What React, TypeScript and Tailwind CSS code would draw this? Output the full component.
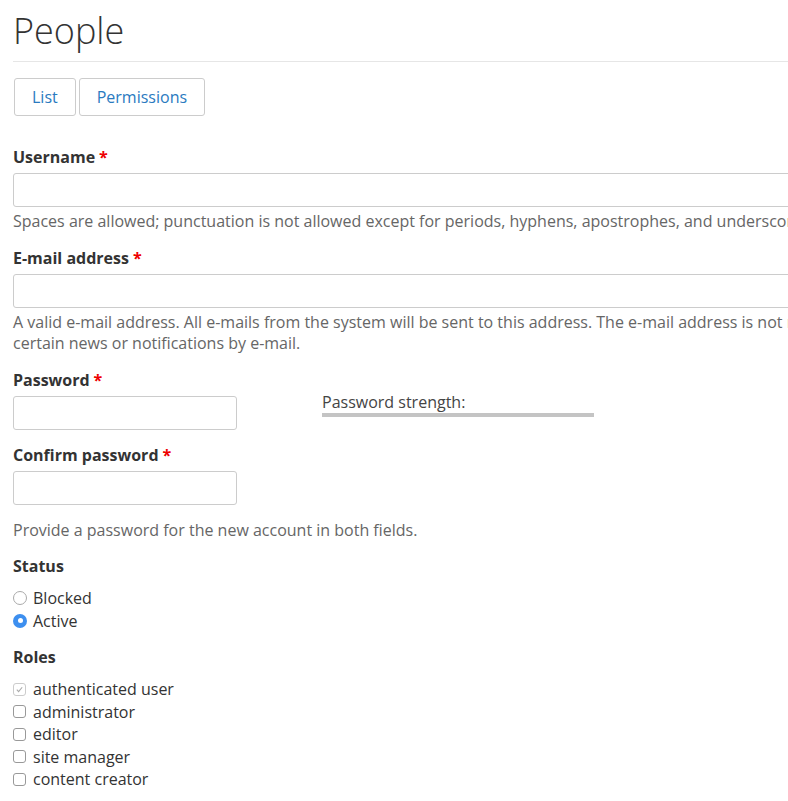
const font = { fontFamily: '"Open Sans", "Noto Sans", sans-serif' };

function Label({ text, required = false }: { text: string; required?: boolean }) {
  return (
    <div className="text-[16px] font-bold leading-[20px] text-[#333]">
      {text}
      {required && <span className="ml-1 text-[#e00]">*</span>}
    </div>
  );
}

function Radio({ label, checked }: { label: string; checked?: boolean }) {
  return (
    <div className="flex h-[23px] items-center gap-[6px]">
      {checked ? (
        <span className="flex h-[14px] w-[14px] items-center justify-center rounded-full bg-[#3d8fef]">
          <span className="h-[5px] w-[5px] rounded-full bg-white" />
        </span>
      ) : (
        <span className="h-[14px] w-[14px] rounded-full border border-[#aaa] bg-white" />
      )}
      <span className="text-[16px] text-[#333]">{label}</span>
    </div>
  );
}

function Check({ label, checked, disabled }: { label: string; checked?: boolean; disabled?: boolean }) {
  return (
    <div className="flex h-[22.5px] items-center gap-[7px]">
      <span
        className={`flex h-[13px] w-[13px] items-center justify-center rounded-[3px] border ${
          disabled ? "border-[#ccc]" : "border-[#999]"
        } bg-white`}
      >
        {checked && (
          <svg viewBox="0 0 10 10" className="h-[9px] w-[9px]">
            <path d="M2 5.2 L4 7.3 L8 2.5" fill="none" stroke="#aaa" strokeWidth="1.2" />
          </svg>
        )}
      </span>
      <span className="text-[16px] text-[#333]">{label}</span>
    </div>
  );
}

export default function App() {
  return (
    <div className="h-[801px] w-[788px] overflow-hidden bg-white" style={font}>
      <div className="w-[1600px] pl-[13px]">
        {/* Title */}
        <h1 className="pt-[8px] text-[36px] font-light leading-[46px] text-[#333]">People</h1>
        <div className="mt-[7px] border-b border-[#e6e6e6]" />

        {/* Tabs */}
        <div className="mt-[16px] flex gap-[3px] pl-[1px]">
          <button className="h-[38px] rounded-[3px] border border-[#ccc] px-[17px] text-[16px] text-[#2a7abf]">
            List
          </button>
          <button className="h-[38px] rounded-[3px] border border-[#ccc] px-[17px] text-[16px] text-[#2a7abf]">
            Permissions
          </button>
        </div>

        <div className="mt-[31px]">
          {/* Username */}
          <Label text="Username" required />
          <div className="mt-[6px] h-[34px] w-[1500px] rounded-[3px] border border-[#ccc]" />
          <p className="mt-[4px] text-[16px] leading-[21px] text-[#666]">
            Spaces are allowed; punctuation is not allowed except for periods, hyphens, apostrophes, and underscores.
          </p>

          {/* Email */}
          <div className="mt-[16px]">
            <Label text="E-mail address" required />
          </div>
          <div className="mt-[6px] h-[34px] w-[1500px] rounded-[3px] border border-[#ccc]" />
          <p className="mt-[4px] w-[1478px] text-[16px] leading-[21px] text-[#666]">
            A valid e-mail address. All e-mails from the system will be sent to this address. The e-mail address is not
            made public and will only be used if you wish to receive a new password or wish to receive certain news or
            notifications by e-mail.
          </p>

          {/* Password */}
          <div className="mt-[16px] flex">
            <div>
              <Label text="Password" required />
              <div className="mt-[6px] h-[34px] w-[224px] rounded-[3px] border border-[#ccc]" />
            </div>
            <div className="ml-[85px] pt-[21px]">
              <div className="text-[16px] leading-[22px] text-[#444]">Password strength:</div>
              <div className="h-[4px] w-[272px] bg-[#c4c4c4]" />
            </div>
          </div>

          <div className="mt-[15px]">
            <Label text="Confirm password" required />
          </div>
          <div className="mt-[6px] h-[34px] w-[224px] rounded-[3px] border border-[#ccc]" />
          <p className="mt-[15px] text-[16px] leading-[21px] text-[#666]">
            Provide a password for the new account in both fields.
          </p>

          {/* Status */}
          <div className="mt-[15px]">
            <Label text="Status" />
          </div>
          <div className="mt-[10px]">
            <Radio label="Blocked" />
            <Radio label="Active" checked />
          </div>

          {/* Roles */}
          <div className="mt-[15px]">
            <Label text="Roles" />
          </div>
          <div className="mt-[11px]">
            <Check label="authenticated user" checked disabled />
            <Check label="administrator" />
            <Check label="editor" />
            <Check label="site manager" />
            <Check label="content creator" />
          </div>
        </div>
      </div>
    </div>
  );
}
